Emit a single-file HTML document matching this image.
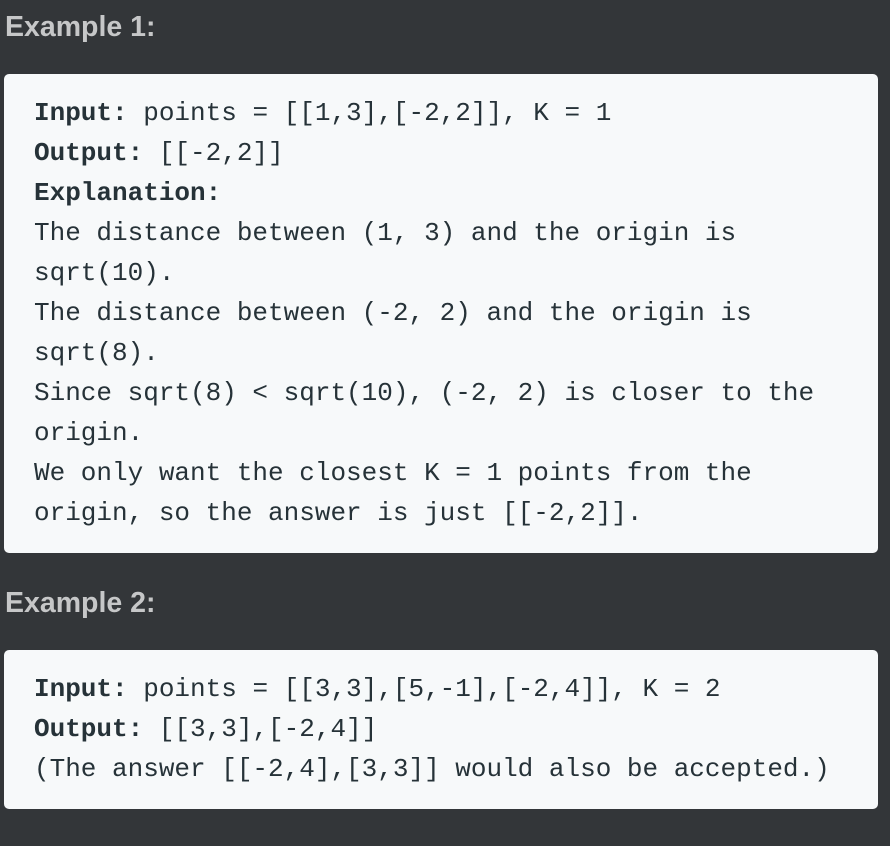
<!DOCTYPE html>
<html><head><style>
html,body{margin:0;padding:0;}
body{width:890px;height:846px;background:#333639;overflow:hidden;position:relative;font-family:"Liberation Sans",sans-serif;}
h3{position:absolute;left:5px;margin:0;font-size:28.5px;font-weight:bold;color:#c6c7c8;line-height:30px;}
.box{position:absolute;left:4px;width:874px;background:#f7f9fa;border-radius:5px;box-sizing:border-box;padding:0 0 0 30px;}
pre{margin:0;font-family:"Liberation Mono",monospace;font-size:26px;line-height:40px;color:#263238;white-space:pre;}
b{color:#263238;}
</style></head><body>
<h3 style="top:12px">Example 1:</h3>
<div class="box" style="top:74px;height:479px;padding-top:19px"><pre><b>Input:</b> points = [[1,3],[-2,2]], K = 1
<b>Output:</b> [[-2,2]]
<b>Explanation:</b>
The distance between (1, 3) and the origin is
sqrt(10).
The distance between (-2, 2) and the origin is
sqrt(8).
Since sqrt(8) &lt; sqrt(10), (-2, 2) is closer to the
origin.
We only want the closest K = 1 points from the
origin, so the answer is just [[-2,2]].</pre></div>
<h3 style="top:588px">Example 2:</h3>
<div class="box" style="top:650px;height:159px;padding-top:19px"><pre><b>Input:</b> points = [[3,3],[5,-1],[-2,4]], K = 2
<b>Output:</b> [[3,3],[-2,4]]
(The answer [[-2,4],[3,3]] would also be accepted.)</pre></div>
</body></html>
